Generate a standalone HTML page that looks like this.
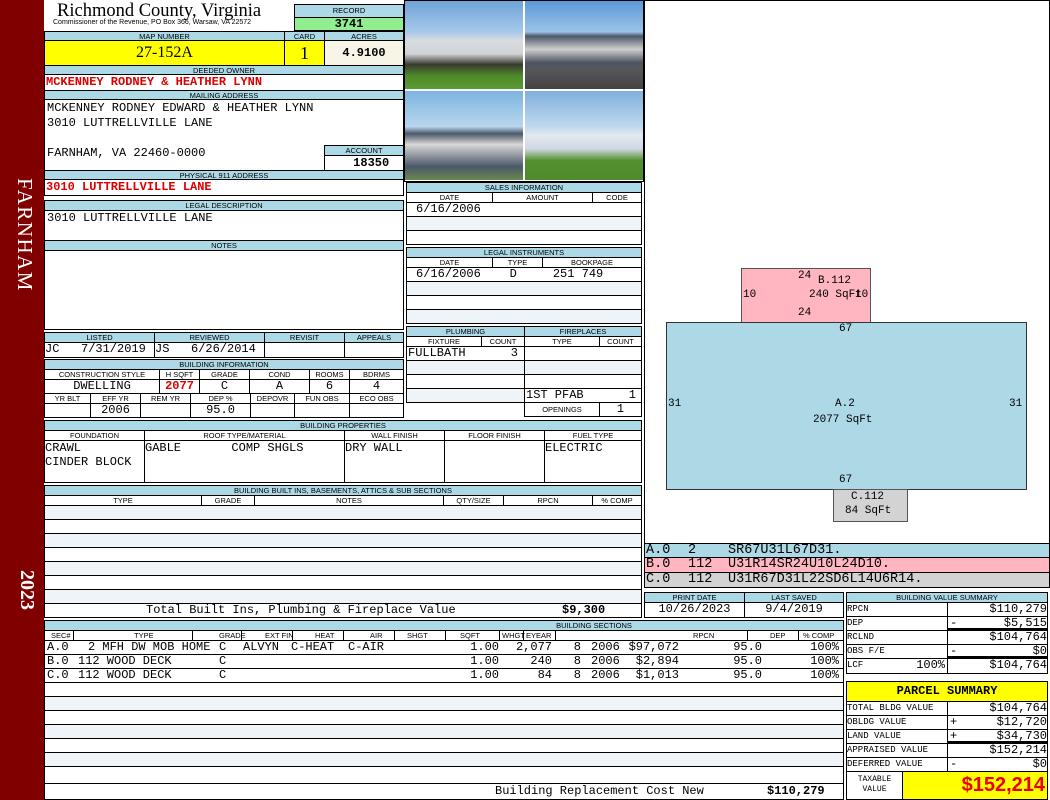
<!DOCTYPE html><html><head><meta charset="utf-8"><style>
body{margin:0;width:1050px;height:800px;position:relative;background:#fff;overflow:hidden;font-family:"Liberation Mono",monospace}
div,span{position:absolute;box-sizing:border-box}
.h{background:#add8e6;border:1px solid #000;font:7.5px/9px "Liberation Sans",sans-serif;text-align:center;color:#000;white-space:nowrap;overflow:hidden}
.w{background:#fff;border:1px solid #000;font:12px/13px "Liberation Mono",monospace;white-space:pre;overflow:hidden}
.c{text-align:center}.r{text-align:right}
.red{color:#d00;font-weight:bold}
.row span{top:0;white-space:pre}
.sep{top:0;height:9px;border-left:1px solid #000}
</style></head><body>
<div style="left:0;top:0;width:44px;height:800px;background:#800000"></div>
<div style="left:7px;top:178px;width:30px;height:130px;color:#fff;font:21px 'Liberation Serif',serif;writing-mode:vertical-rl;letter-spacing:1.5px">FARNHAM</div>
<div style="left:8px;top:570px;width:30px;height:60px;color:#fff;font:bold 20px 'Liberation Serif',serif;writing-mode:vertical-rl">2023</div>

<div style="left:57px;top:1px;font:18.5px/20px 'Liberation Serif',serif;white-space:nowrap">Richmond County, Virginia</div>
<div style="left:53px;top:19px;font:7px/8px 'Liberation Sans',sans-serif;white-space:nowrap">Commissioner of the Revenue, PO Box 366, Warsaw, VA 22572</div>
<div class="h" style="left:294px;top:4px;width:110px;height:14px;line-height:12px">RECORD</div>
<div class="w c" style="left:294px;top:17px;width:110px;height:14px;background:#90ee90;font-weight:bold;line-height:12px">3741</div>

<div class="h" style="left:44px;top:31px;width:241px;height:10px">MAP NUMBER</div>
<div class="h" style="left:284px;top:31px;width:41px;height:10px">CARD</div>
<div class="h" style="left:324px;top:31px;width:80px;height:10px">ACRES</div>
<div class="w c" style="left:44px;top:40px;width:241px;height:26px;background:#ff0;font:16px/24px 'Liberation Serif',serif">27-152A</div>
<div class="w c" style="left:284px;top:40px;width:41px;height:26px;background:#ff0;font:18px/24px 'Liberation Serif',serif">1</div>
<div class="w c" style="left:324px;top:40px;width:80px;height:26px;background:#f7f5e6;font-weight:bold;line-height:24px">4.9100</div>

<div class="h" style="left:44px;top:65px;width:360px;height:10px">DEEDED OWNER</div>
<div class="w red" style="left:44px;top:74px;width:360px;height:17px;line-height:15px;padding-left:1px">MCKENNEY RODNEY &amp; HEATHER LYNN</div>
<div class="h" style="left:44px;top:90px;width:360px;height:10px">MAILING ADDRESS</div>
<div class="w" style="left:44px;top:99px;width:360px;height:72px;line-height:15px;padding:1px 2px">MCKENNEY RODNEY EDWARD &amp; HEATHER LYNN
3010 LUTTRELLVILLE LANE

FARNHAM, VA 22460-0000</div>
<div class="h" style="left:324px;top:145px;width:80px;height:11px">ACCOUNT</div>
<div class="w c" style="left:324px;top:155px;width:80px;height:16px;font-weight:bold;line-height:14px">  18350</div>
<div class="h" style="left:44px;top:170px;width:360px;height:10px">PHYSICAL 911 ADDRESS</div>
<div class="w red" style="left:44px;top:179px;width:360px;height:17px;line-height:15px;padding-left:1px">3010 LUTTRELLVILLE LANE</div>
<div class="h" style="left:44px;top:200px;width:360px;height:11px">LEGAL DESCRIPTION</div>
<div class="w" style="left:44px;top:210px;width:360px;height:31px;padding:1px 2px">3010 LUTTRELLVILLE LANE</div>
<div class="h" style="left:44px;top:240px;width:360px;height:11px">NOTES</div>
<div class="w" style="left:44px;top:250px;width:360px;height:80px"></div>

<!-- photos -->
<div style="left:404px;top:0;width:240px;height:182px;background:#fff;border:1px solid #000"></div>
<div style="left:405px;top:1px;width:118px;height:88px;background:linear-gradient(#6fa3d8 0,#a7c8ea 35%,#d8dce0 45%,#d0d4d6 60%,#3a3a30 72%,#4d8a2a 85%,#5c9a30 100%)"></div>
<div style="left:525px;top:1px;width:118px;height:88px;background:linear-gradient(#5d98d8 0,#9cc3e8 35%,#4b5868 40%,#cfcfcf 55%,#4d5460 70%,#57575a 78%,#444 100%)"></div>
<div style="left:405px;top:91px;width:118px;height:89px;background:linear-gradient(#7db4e0 0,#b8d6ee 40%,#4a5868 48%,#d8d8d8 60%,#4a5868 85%,#6a8a50 100%)"></div>
<div style="left:525px;top:91px;width:118px;height:89px;background:linear-gradient(#7fb0dc 0,#c0d8ee 40%,#e4e8f0 50%,#d0d8e4 65%,#52902e 78%,#4f8a2c 100%)"></div>

<!-- sales -->
<div class="h" style="left:406px;top:182px;width:236px;height:11px">SALES INFORMATION</div>
<div class="h" style="left:406px;top:192px;width:87px;height:11px;background:#fff">DATE</div>
<div class="h" style="left:492px;top:192px;width:101px;height:11px;background:#fff">AMOUNT</div>
<div class="h" style="left:592px;top:192px;width:50px;height:11px;background:#fff">CODE</div>
<div class="w" style="left:406px;top:202px;width:236px;height:15px;padding-left:9px">6/16/2006</div>
<div class="w" style="left:406px;top:216px;width:236px;height:15px;background:#eef4f8"></div>
<div class="w" style="left:406px;top:230px;width:236px;height:15px"></div>
<div class="h" style="left:406px;top:247px;width:236px;height:11px">LEGAL INSTRUMENTS</div>
<div class="h" style="left:406px;top:257px;width:87px;height:11px;background:#fff">DATE</div>
<div class="h" style="left:492px;top:257px;width:51px;height:11px;background:#fff">TYPE</div>
<div class="h" style="left:542px;top:257px;width:100px;height:11px;background:#fff">BOOKPAGE</div>
<div class="w" style="left:406px;top:267px;width:236px;height:15px;padding-left:9px">6/16/2006    D     251 749</div>
<div class="w" style="left:406px;top:281px;width:236px;height:15px;background:#eef4f8"></div>
<div class="w" style="left:406px;top:295px;width:236px;height:15px"></div>
<div class="w" style="left:406px;top:309px;width:236px;height:15px;background:#eef4f8"></div>

<!-- listed -->
<div class="h" style="left:44px;top:332px;width:111px;height:11px">LISTED</div>
<div class="h" style="left:154px;top:332px;width:111px;height:11px">REVIEWED</div>
<div class="h" style="left:264px;top:332px;width:81px;height:11px">REVISIT</div>
<div class="h" style="left:344px;top:332px;width:60px;height:11px">APPEALS</div>
<div class="w" style="left:44px;top:342px;width:111px;height:16px">JC   7/31/2019</div>
<div class="w" style="left:154px;top:342px;width:111px;height:16px">JS   6/26/2014</div>
<div class="w" style="left:264px;top:342px;width:81px;height:16px"></div>
<div class="w" style="left:344px;top:342px;width:60px;height:16px"></div>

<div class="h" style="left:44px;top:359px;width:360px;height:11px">BUILDING INFORMATION</div>
<div class="h" style="left:44px;top:369px;width:116px;height:11px;background:#fff">CONSTRUCTION STYLE</div>
<div class="h" style="left:159px;top:369px;width:41px;height:11px;background:#fff">H SQFT</div>
<div class="h" style="left:199px;top:369px;width:51px;height:11px;background:#fff">GRADE</div>
<div class="h" style="left:249px;top:369px;width:61px;height:11px;background:#fff">COND</div>
<div class="h" style="left:309px;top:369px;width:41px;height:11px;background:#fff">ROOMS</div>
<div class="h" style="left:349px;top:369px;width:55px;height:11px;background:#fff">BDRMS</div>
<div class="w c" style="left:44px;top:379px;width:116px;height:15px">DWELLING</div>
<div class="w c red" style="left:159px;top:379px;width:41px;height:15px">2077</div>
<div class="w c" style="left:199px;top:379px;width:51px;height:15px">C</div>
<div class="w c" style="left:249px;top:379px;width:61px;height:15px">A</div>
<div class="w c" style="left:309px;top:379px;width:41px;height:15px">6</div>
<div class="w c" style="left:349px;top:379px;width:55px;height:15px">4</div>
<div class="h" style="left:44px;top:393px;width:47px;height:11px;background:#fff">YR BLT</div>
<div class="h" style="left:90px;top:393px;width:51px;height:11px;background:#fff">EFF YR</div>
<div class="h" style="left:140px;top:393px;width:51px;height:11px;background:#fff">REM YR</div>
<div class="h" style="left:190px;top:393px;width:61px;height:11px;background:#fff">DEP %</div>
<div class="h" style="left:250px;top:393px;width:45px;height:11px;background:#fff">DEPOVR</div>
<div class="h" style="left:294px;top:393px;width:56px;height:11px;background:#fff">FUN OBS</div>
<div class="h" style="left:349px;top:393px;width:55px;height:11px;background:#fff">ECO OBS</div>
<div class="w" style="left:44px;top:403px;width:47px;height:15px"></div>
<div class="w c" style="left:90px;top:403px;width:51px;height:15px">2006</div>
<div class="w" style="left:140px;top:403px;width:51px;height:15px"></div>
<div class="w c" style="left:190px;top:403px;width:61px;height:15px">95.0</div>
<div class="w" style="left:250px;top:403px;width:45px;height:15px"></div>
<div class="w" style="left:294px;top:403px;width:56px;height:15px"></div>
<div class="w" style="left:349px;top:403px;width:55px;height:15px"></div>

<!-- plumbing -->
<div class="h" style="left:406px;top:326px;width:119px;height:11px">PLUMBING</div>
<div class="h" style="left:524px;top:326px;width:118px;height:11px">FIREPLACES</div>
<div class="h" style="left:406px;top:336px;width:76px;height:11px;background:#fff">FIXTURE</div>
<div class="h" style="left:481px;top:336px;width:44px;height:11px;background:#fff">COUNT</div>
<div class="h" style="left:524px;top:336px;width:76px;height:11px;background:#fff">TYPE</div>
<div class="h" style="left:599px;top:336px;width:43px;height:11px;background:#fff">COUNT</div>
<div class="w" style="left:406px;top:346px;width:119px;height:15px;padding-left:1px">FULLBATH<span style="right:6px;top:0">3</span></div>
<div class="w" style="left:406px;top:360px;width:119px;height:15px;background:#eef4f8"></div>
<div class="w" style="left:406px;top:374px;width:119px;height:15px"></div>
<div class="w" style="left:406px;top:388px;width:119px;height:15px;background:#eef4f8"></div>
<div class="w" style="left:524px;top:346px;width:118px;height:15px"></div>
<div class="w" style="left:524px;top:360px;width:118px;height:15px;background:#eef4f8"></div>
<div class="w" style="left:524px;top:374px;width:118px;height:15px"></div>
<div class="w" style="left:524px;top:388px;width:118px;height:15px;padding-left:1px">1ST PFAB<span style="right:5px;top:0">1</span></div>
<div class="h" style="left:524px;top:402px;width:76px;height:15px;background:#fff;line-height:13px">OPENINGS</div>
<div class="w c" style="left:599px;top:402px;width:43px;height:15px">1</div>

<!-- properties -->
<div class="h" style="left:44px;top:420px;width:598px;height:11px">BUILDING PROPERTIES</div>
<div class="h" style="left:44px;top:430px;width:101px;height:11px;background:#fff">FOUNDATION</div>
<div class="h" style="left:144px;top:430px;width:201px;height:11px;background:#fff">ROOF TYPE/MATERIAL</div>
<div class="h" style="left:344px;top:430px;width:101px;height:11px;background:#fff">WALL FINISH</div>
<div class="h" style="left:444px;top:430px;width:101px;height:11px;background:#fff">FLOOR FINISH</div>
<div class="h" style="left:544px;top:430px;width:98px;height:11px;background:#fff">FUEL TYPE</div>
<div class="w" style="left:44px;top:440px;width:101px;height:43px;line-height:14px">CRAWL
CINDER BLOCK</div>
<div class="w" style="left:144px;top:440px;width:201px;height:43px;line-height:14px">GABLE       COMP SHGLS</div>
<div class="w" style="left:344px;top:440px;width:101px;height:43px;line-height:14px">DRY WALL</div>
<div class="w" style="left:444px;top:440px;width:101px;height:43px"></div>
<div class="w" style="left:544px;top:440px;width:98px;height:43px;line-height:14px">ELECTRIC</div>

<!-- built ins -->
<div class="h" style="left:44px;top:485px;width:598px;height:11px">BUILDING BUILT INS, BASEMENTS, ATTICS &amp; SUB SECTIONS</div>
<div class="h" style="left:44px;top:495px;width:158px;height:11px;background:#fff">TYPE</div>
<div class="h" style="left:201px;top:495px;width:54px;height:11px;background:#fff">GRADE</div>
<div class="h" style="left:254px;top:495px;width:190px;height:11px;background:#fff">NOTES</div>
<div class="h" style="left:443px;top:495px;width:61px;height:11px;background:#fff">QTY/SIZE</div>
<div class="h" style="left:503px;top:495px;width:90px;height:11px;background:#fff">RPCN</div>
<div class="h" style="left:592px;top:495px;width:50px;height:11px;background:#fff">% COMP</div>
<div class="w" style="left:44px;top:505px;width:598px;height:15px;background:#eef4f8"></div>
<div class="w" style="left:44px;top:519px;width:598px;height:15px"></div>
<div class="w" style="left:44px;top:533px;width:598px;height:15px;background:#eef4f8"></div>
<div class="w" style="left:44px;top:547px;width:598px;height:15px"></div>
<div class="w" style="left:44px;top:561px;width:598px;height:15px;background:#eef4f8"></div>
<div class="w" style="left:44px;top:575px;width:598px;height:15px"></div>
<div class="w" style="left:44px;top:589px;width:598px;height:15px;background:#eef4f8"></div>
<div class="w" style="left:44px;top:603px;width:598px;height:15px"><span style="left:101px;top:0">Total Built Ins, Plumbing &amp; Fireplace Value</span><span style="left:517px;top:0;font-weight:bold">$9,300</span></div>

<!-- sections -->
<div class="h" style="left:44px;top:620px;width:800px;height:11px;padding-left:300px">BUILDING SECTIONS</div>
<div class="h" style="left:44px;top:630px;width:800px;height:11px;background:#fff;text-align:left">
<span style="left:6px">SEC#</span><span style="left:89px">TYPE</span><span style="left:174px">GRADE</span><span style="left:220px">EXT FIN</span><span style="left:270px">HEAT</span><span style="left:325px">AIR</span><span style="left:362px">SHGT</span><span style="left:415px">SQFT</span><span style="left:457px">WHGT</span><span style="left:481px">EYEAR</span><span style="left:648px">RPCN</span><span style="left:725px">DEP</span><span style="left:758px">% COMP</span>
<span class="sep" style="left:28px"></span><span class="sep" style="left:147px"></span><span class="sep" style="left:196px"></span><span class="sep" style="left:247px"></span><span class="sep" style="left:298px"></span><span class="sep" style="left:349px"></span><span class="sep" style="left:400px"></span><span class="sep" style="left:454px"></span><span class="sep" style="left:478px"></span><span class="sep" style="left:510px"></span><span class="sep" style="left:702px"></span><span class="sep" style="left:753px"></span>
</div>
<div class="w row" style="left:44px;top:640px;width:800px;height:15px"><span style="left:2px">A.0</span><span style="left:43px">2 MFH DW MOB HOME</span><span style="left:174px">C</span><span style="left:198px">ALVYN</span><span style="left:246px">C-HEAT</span><span style="left:303px">C-AIR</span><span style="right:344px">1.00</span><span style="right:291px">2,077</span><span style="right:262px">8</span><span style="left:546px">2006</span><span style="right:164px">$97,072</span><span style="right:81px">95.0</span><span style="right:4px">100%</span></div>
<div class="w row" style="left:44px;top:654px;width:800px;height:15px"><span style="left:2px">B.0</span><span style="left:33px">112 WOOD DECK</span><span style="left:174px">C</span><span style="right:344px">1.00</span><span style="right:291px">240</span><span style="right:262px">8</span><span style="left:546px">2006</span><span style="right:164px">$2,894</span><span style="right:81px">95.0</span><span style="right:4px">100%</span></div>
<div class="w row" style="left:44px;top:668px;width:800px;height:15px"><span style="left:2px">C.0</span><span style="left:33px">112 WOOD DECK</span><span style="left:174px">C</span><span style="right:344px">1.00</span><span style="right:291px">84</span><span style="right:262px">8</span><span style="left:546px">2006</span><span style="right:164px">$1,013</span><span style="right:81px">95.0</span><span style="right:4px">100%</span></div>
<div class="w" style="left:44px;top:682px;width:800px;height:15px"></div>
<div class="w" style="left:44px;top:696px;width:800px;height:15px;background:#eef4f8"></div>
<div class="w" style="left:44px;top:710px;width:800px;height:15px"></div>
<div class="w" style="left:44px;top:724px;width:800px;height:15px;background:#eef4f8"></div>
<div class="w" style="left:44px;top:738px;width:800px;height:15px"></div>
<div class="w" style="left:44px;top:752px;width:800px;height:15px;background:#eef4f8"></div>
<div class="w" style="left:44px;top:766px;width:800px;height:18px"></div>
<div class="w" style="left:44px;top:783px;width:800px;height:17px;line-height:15px"><span style="left:450px;top:0">Building Replacement Cost New</span><span style="left:722px;top:0;font-weight:bold">$110,279</span></div>

<!-- sketch -->
<div style="left:644px;top:0;width:406px;height:544px;border:1px solid #000;background:#fff"></div>
<div style="left:741px;top:268px;width:130px;height:55px;background:#ffb6c1;border:1px solid #555"></div>
<div style="left:666px;top:322px;width:361px;height:168px;background:#add8e6;border:1px solid #333"></div>
<div style="left:833px;top:489px;width:75px;height:33px;background:#d3d3d3;border:1px solid #555"></div>
<div style="left:798px;top:270px;font:11px 'Liberation Mono'">24</div>
<div style="left:818px;top:275px;font:11px 'Liberation Mono'">B.112</div>
<div style="left:743px;top:289px;font:11px 'Liberation Mono'">10</div>
<div style="left:809px;top:289px;font:11px 'Liberation Mono';white-space:nowrap">240 SqFt</div>
<div style="left:855px;top:289px;font:11px 'Liberation Mono'">10</div>
<div style="left:798px;top:307px;font:11px 'Liberation Mono'">24</div>
<div style="left:839px;top:323px;font:11px 'Liberation Mono'">67</div>
<div style="left:668px;top:398px;font:11px 'Liberation Mono'">31</div>
<div style="left:1009px;top:398px;font:11px 'Liberation Mono'">31</div>
<div style="left:835px;top:398px;font:11px 'Liberation Mono'">A.2</div>
<div style="left:813px;top:414px;font:11px 'Liberation Mono';white-space:nowrap">2077 SqFt</div>
<div style="left:839px;top:474px;font:11px 'Liberation Mono'">67</div>
<div style="left:851px;top:491px;font:11px 'Liberation Mono'">C.112</div>
<div style="left:845px;top:505px;font:11px 'Liberation Mono';white-space:nowrap">84 SqFt</div>
<div class="w" style="left:644px;top:543px;width:406px;height:15px;background:#add8e6;font-size:13.5px"><span style="left:1px;top:0">A.0</span><span style="left:43px;top:0">2</span><span style="left:83px;top:0">SR67U31L67D31.</span></div>
<div class="w" style="left:644px;top:557px;width:406px;height:16px;background:#ffb6c1;font-size:13.5px"><span style="left:1px;top:0">B.0</span><span style="left:43px;top:0">112</span><span style="left:83px;top:0">U31R14SR24U10L24D10.</span></div>
<div class="w" style="left:644px;top:572px;width:406px;height:16px;background:#d3d3d3;font-size:13.5px"><span style="left:1px;top:0">C.0</span><span style="left:43px;top:0">112</span><span style="left:83px;top:0">U31R67D31L22SD6L14U6R14.</span></div>

<div class="h" style="left:644px;top:592px;width:101px;height:11px">PRINT DATE</div>
<div class="h" style="left:744px;top:592px;width:100px;height:11px">LAST SAVED</div>
<div class="w c" style="left:644px;top:602px;width:101px;height:16px">10/26/2023</div>
<div class="w c" style="left:744px;top:602px;width:100px;height:16px">9/4/2019</div>

<div class="h" style="left:846px;top:592px;width:202px;height:11px">BUILDING VALUE SUMMARY</div>
<div class="w" style="left:846px;top:602px;width:102px;height:15px;font-size:9px">RPCN</div>
<div class="w r" style="left:947px;top:602px;width:101px;height:15px">$110,279</div>
<div class="w" style="left:846px;top:616px;width:102px;height:15px;font-size:9px">DEP</div>
<div class="w r" style="left:947px;top:616px;width:101px;height:15px;border-bottom:3px solid #000"><span style="left:2px;top:0">-</span>$5,515</div>
<div class="w" style="left:846px;top:630px;width:102px;height:15px;font-size:9px">RCLND</div>
<div class="w r" style="left:947px;top:630px;width:101px;height:15px">$104,764</div>
<div class="w" style="left:846px;top:644px;width:102px;height:15px;font-size:9px">OBS F/E</div>
<div class="w r" style="left:947px;top:644px;width:101px;height:15px;border-bottom:3px solid #000"><span style="left:2px;top:0">-</span>$0</div>
<div class="w" style="left:846px;top:658px;width:102px;height:16px;font-size:9px">LCF<span style="right:2px;top:0;font-size:12px">100%</span></div>
<div class="w r" style="left:947px;top:658px;width:101px;height:16px">$104,764</div>

<div class="w c" style="left:846px;top:681px;width:202px;height:21px;background:#ff0;font-weight:bold;line-height:19px">PARCEL SUMMARY</div>
<div class="w" style="left:846px;top:701px;width:102px;height:15px;font-size:9px">TOTAL BLDG VALUE</div>
<div class="w r" style="left:947px;top:701px;width:101px;height:15px">$104,764</div>
<div class="w" style="left:846px;top:715px;width:102px;height:15px;font-size:9px">OBLDG VALUE</div>
<div class="w r" style="left:947px;top:715px;width:101px;height:15px"><span style="left:2px;top:0">+</span>$12,720</div>
<div class="w" style="left:846px;top:729px;width:102px;height:15px;font-size:9px">LAND VALUE</div>
<div class="w r" style="left:947px;top:729px;width:101px;height:15px;border-bottom:3px solid #000"><span style="left:2px;top:0">+</span>$34,730</div>
<div class="w" style="left:846px;top:743px;width:102px;height:15px;font-size:9px">APPRAISED VALUE</div>
<div class="w r" style="left:947px;top:743px;width:101px;height:15px">$152,214</div>
<div class="w" style="left:846px;top:757px;width:102px;height:15px;font-size:9px">DEFERRED VALUE</div>
<div class="w r" style="left:947px;top:757px;width:101px;height:15px"><span style="left:2px;top:0">-</span>$0</div>
<div class="w c" style="left:846px;top:771px;width:57px;height:29px;font-size:8px;line-height:10px;padding-top:3px">TAXABLE
VALUE</div>
<div class="w r" style="left:902px;top:771px;width:146px;height:29px;background:#ff0;color:#e00;font:bold 20px/27px 'Liberation Sans',sans-serif;padding-right:2px">$152,214</div>
</body></html>
